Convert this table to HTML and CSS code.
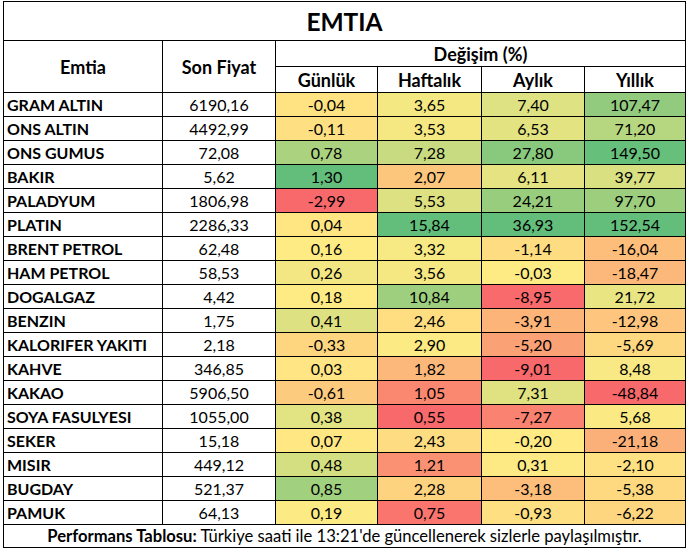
FILE: index.html
```html
<!DOCTYPE html>
<html lang="tr">
<head>
<meta charset="utf-8">
<title>EMTIA</title>
<link rel="stylesheet" href="styles.css">
</head>
<body>
<div class="sheet">
  <div class="cell title">EMTIA</div>
  <div class="cell head tall">Emtia</div>
  <div class="cell head tall">Son Fiyat</div>
  <div class="cell head wide">Değişim (%)</div>
  <div class="cell head">Günlük</div>
  <div class="cell head">Haftalık</div>
  <div class="cell head">Aylık</div>
  <div class="cell head">Yıllık</div>

  <div class="cell name">GRAM ALTIN</div><div class="cell num">6190,16</div><div class="cell num v1">-0,04</div><div class="cell num v2">3,65</div><div class="cell num v3">7,40</div><div class="cell num v4">107,47</div>
  <div class="cell name">ONS ALTIN</div><div class="cell num">4492,99</div><div class="cell num v1">-0,11</div><div class="cell num v2">3,53</div><div class="cell num v3">6,53</div><div class="cell num v4">71,20</div>
  <div class="cell name">ONS GUMUS</div><div class="cell num">72,08</div><div class="cell num v1">0,78</div><div class="cell num v2">7,28</div><div class="cell num v3">27,80</div><div class="cell num v4">149,50</div>
  <div class="cell name">BAKIR</div><div class="cell num">5,62</div><div class="cell num v1">1,30</div><div class="cell num v2">2,07</div><div class="cell num v3">6,11</div><div class="cell num v4">39,77</div>
  <div class="cell name">PALADYUM</div><div class="cell num">1806,98</div><div class="cell num v1">-2,99</div><div class="cell num v2">5,53</div><div class="cell num v3">24,21</div><div class="cell num v4">97,70</div>
  <div class="cell name">PLATIN</div><div class="cell num">2286,33</div><div class="cell num v1">0,04</div><div class="cell num v2">15,84</div><div class="cell num v3">36,93</div><div class="cell num v4">152,54</div>
  <div class="cell name">BRENT PETROL</div><div class="cell num">62,48</div><div class="cell num v1">0,16</div><div class="cell num v2">3,32</div><div class="cell num v3">-1,14</div><div class="cell num v4">-16,04</div>
  <div class="cell name">HAM PETROL</div><div class="cell num">58,53</div><div class="cell num v1">0,26</div><div class="cell num v2">3,56</div><div class="cell num v3">-0,03</div><div class="cell num v4">-18,47</div>
  <div class="cell name">DOGALGAZ</div><div class="cell num">4,42</div><div class="cell num v1">0,18</div><div class="cell num v2">10,84</div><div class="cell num v3">-8,95</div><div class="cell num v4">21,72</div>
  <div class="cell name">BENZIN</div><div class="cell num">1,75</div><div class="cell num v1">0,41</div><div class="cell num v2">2,46</div><div class="cell num v3">-3,91</div><div class="cell num v4">-12,98</div>
  <div class="cell name">KALORIFER YAKITI</div><div class="cell num">2,18</div><div class="cell num v1">-0,33</div><div class="cell num v2">2,90</div><div class="cell num v3">-5,20</div><div class="cell num v4">-5,69</div>
  <div class="cell name">KAHVE</div><div class="cell num">346,85</div><div class="cell num v1">0,03</div><div class="cell num v2">1,82</div><div class="cell num v3">-9,01</div><div class="cell num v4">8,48</div>
  <div class="cell name">KAKAO</div><div class="cell num">5906,50</div><div class="cell num v1">-0,61</div><div class="cell num v2">1,05</div><div class="cell num v3">7,31</div><div class="cell num v4">-48,84</div>
  <div class="cell name">SOYA FASULYESI</div><div class="cell num">1055,00</div><div class="cell num v1">0,38</div><div class="cell num v2">0,55</div><div class="cell num v3">-7,27</div><div class="cell num v4">5,68</div>
  <div class="cell name">SEKER</div><div class="cell num">15,18</div><div class="cell num v1">0,07</div><div class="cell num v2">2,43</div><div class="cell num v3">-0,20</div><div class="cell num v4">-21,18</div>
  <div class="cell name">MISIR</div><div class="cell num">449,12</div><div class="cell num v1">0,48</div><div class="cell num v2">1,21</div><div class="cell num v3">0,31</div><div class="cell num v4">-2,10</div>
  <div class="cell name">BUGDAY</div><div class="cell num">521,37</div><div class="cell num v1">0,85</div><div class="cell num v2">2,28</div><div class="cell num v3">-3,18</div><div class="cell num v4">-5,38</div>
  <div class="cell name">PAMUK</div><div class="cell num">64,13</div><div class="cell num v1">0,19</div><div class="cell num v2">0,75</div><div class="cell num v3">-0,93</div><div class="cell num v4">-6,22</div>

  <div class="cell foot"><b>Performans Tablosu:</b>&nbsp;Türkiye saati ile 13:21'de güncellenerek sizlerle paylaşılmıştır.</div>
</div>
<script src="script.js"></script>
</body>
</html>
```

FILE: styles.css
```css
html, body {
  margin: 0;
  padding: 0;
  background: #fff;
}

body {
  font-family: Lato, "Open Sans", sans-serif;
  font-size: 16px;
  color: #000;
}

.sheet {
  display: grid;
  grid-template-columns: 158px 112px 101px 103px 102px 100px;
  grid-template-rows: 38px 25px 25px repeat(18, 23px) 22px;
  gap: 1px;
  background: #000;
  border: 1px solid #000;
  width: max-content;
  margin: 1px 0 0 3px;
}

.cell {
  background: #fff;
  display: flex;
  align-items: center;
  justify-content: center;
  white-space: nowrap;
  line-height: 1;
}

.num {
  font-size: 16px;
  padding-top: 1px;
}

.title {
  grid-column: 1 / -1;
  font-weight: 700;
  font-size: 24.5px;
  padding-top: 3px;
}

.head {
  font-weight: 700;
  font-size: 18px;
}

.tall {
  grid-row: span 2;
}

.wide {
  grid-column: span 4;
}

.name {
  justify-content: flex-start;
  padding-left: 3px;
  padding-top: 1px;
  font-weight: 700;
  font-size: 16px;
}

.foot {
  grid-column: 1 / -1;
  font-size: 16.6px;
}

.foot b {
  font-weight: 700;
}
```

FILE: script.js
```js
(function () {
  var RED = [248, 105, 107], YEL = [255, 235, 132], GRN = [99, 190, 123];
  function mix(a, b, t) {
    return a.map(function (x, k) { return Math.round(x + (b[k] - x) * t); });
  }
  for (var c = 1; c <= 4; c++) {
    var cells = Array.prototype.slice.call(document.querySelectorAll('.v' + c));
    var vals = cells.map(function (e) { return parseFloat(e.textContent.replace(',', '.')); });
    var s = vals.slice().sort(function (a, b) { return a - b; });
    var n = s.length, p = (n - 1) * 0.5, lo = Math.floor(p), hi = Math.ceil(p);
    var mid = s[lo] + (s[hi] - s[lo]) * (p - lo);
    var min = s[0], max = s[n - 1];
    cells.forEach(function (e, i) {
      var v = vals[i], col;
      if (v <= mid) col = mix(RED, YEL, (v - min) / (mid - min));
      else col = mix(YEL, GRN, (v - mid) / (max - mid));
      e.style.backgroundColor = 'rgb(' + col.join(',') + ')';
    });
  }
})();
```
